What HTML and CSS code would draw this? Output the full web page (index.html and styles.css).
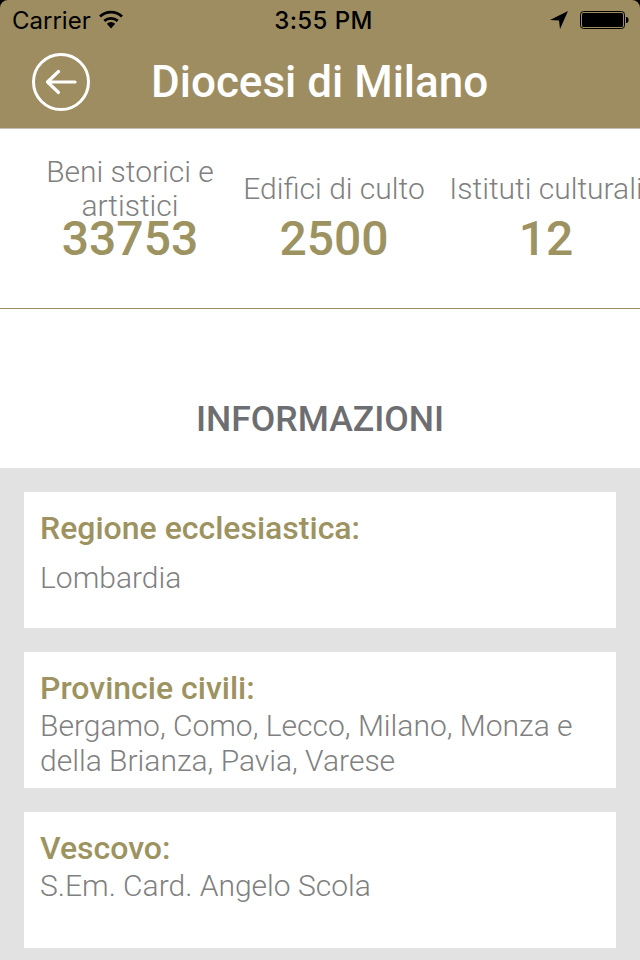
FILE: index.html
```html
<!DOCTYPE html>
<html lang="it">
<head>
<meta charset="utf-8">
<title>Diocesi di Milano</title>
<link rel="stylesheet" href="styles.css">
</head>
<body>
<div class="screen">
  <header class="top">
    <div class="status">
      <div class="status-left">
        <span>Carrier</span>
        <svg class="wifi" width="26" height="20" viewBox="0 0 26 20"><path d="M13 18.500 L8.800 13.800 A6.500 6.500 0 0 1 17.200 13.800 Z" fill="#000"/><path d="M6.300 10.900 A10 10 0 0 1 19.700 10.900" fill="none" stroke="#000" stroke-width="2.800"/><path d="M2 6.500 A16 16 0 0 1 24 6.500" fill="none" stroke="#000" stroke-width="2.800"/></svg>
      </div>
      <div class="status-time">3:55 PM</div>
      <div class="status-right">
        <svg width="20" height="20" viewBox="0 0 20 20"><path d="M19 1 L1 10 L10 10.500 L11 19 Z" fill="#000"/></svg>
        <svg width="49" height="20" viewBox="0 0 49 20"><rect x="0.500" y="1.500" width="44" height="17" rx="3" fill="none" stroke="#000"/><rect x="2" y="3" width="41" height="14" rx="1.500" fill="#000"/><path d="M46 7 C48 7 48.500 8 48.500 10 C48.500 12 48 13 46 13 Z" fill="#000"/></svg>
      </div>
    </div>
    <div class="nav">
      <svg class="back" width="60" height="60" viewBox="0 0 60 60"><circle cx="30" cy="30" r="27.500" fill="none" stroke="#fff" stroke-width="3"/><path d="M44 30 H17 M27.500 19.500 L16.500 30 L27.500 40.500" fill="none" stroke="#fff" stroke-width="3.200" stroke-linecap="round" stroke-linejoin="round"/></svg>
      <h1 class="title">Diocesi di Milano</h1>
    </div>
    <i class="corner corner-l"></i>
    <i class="corner corner-r"></i>
  </header>
  <section class="stats">
    <div class="stat stat-a"><div class="stat-label">Beni storici e artistici</div><div class="stat-num">33753</div></div>
    <div class="stat stat-b"><div class="stat-label">Edifici di culto</div><div class="stat-num">2500</div></div>
    <div class="stat stat-c"><div class="stat-label">Istituti culturali</div><div class="stat-num">12</div></div>
  </section>
  <h2 class="section-title">INFORMAZIONI</h2>
  <section class="panel">
    <article class="card card-a"><h3 class="card-head">Regione ecclesiastica:</h3><p class="card-text">Lombardia</p></article>
    <article class="card"><h3 class="card-head">Provincie civili:</h3><p class="card-text">Bergamo, Como, Lecco, Milano, Monza e della Brianza, Pavia, Varese</p></article>
    <article class="card"><h3 class="card-head">Vescovo:</h3><p class="card-text">S.Em. Card. Angelo Scola</p></article>
  </section>
</div>
</body>
</html>
```
FILE: styles.css
```css
html, body { margin: 0; padding: 0; }
body { width: 640px; height: 960px; overflow: hidden; background: #fff; font-family: Roboto, "Liberation Sans", sans-serif; }
.screen { width: 640px; height: 960px; display: flex; flex-direction: column; overflow: hidden; }
.top { position: relative; height: 129px; flex: none; box-sizing: border-box; background: #9e8d60; border-bottom: 1px solid #c4c0b4; }
.status { height: 40px; display: flex; align-items: center; justify-content: space-between; padding: 0 11px 0 12px; font-family: Inter, sans-serif; font-size: 24px; color: #000; position: relative; }
.status-left { display: flex; align-items: center; gap: 7px; }
.status-time { position: absolute; left: 7px; right: 0; text-align: center; font-weight: 500; font-size: 24px; letter-spacing: 0.4px; }
.status-right { display: flex; align-items: center; gap: 11px; }
.nav { display: flex; align-items: center; height: 84px; padding-left: 31px; gap: 60px; }
.back { flex: none; }
.title { margin: 0; color: #fff; font-size: 44px; font-weight: 500; line-height: 50px; white-space: nowrap; }
.corner { position: absolute; top: 0; width: 8px; height: 8px; background: #000; }
.corner-l { left: 0; clip-path: path("M0 0 H8 A8 8 0 0 0 0 8 Z"); }
.corner-r { right: 0; clip-path: path("M0 0 H8 V8 A8 8 0 0 0 0 0 Z"); }
.stats { height: 180px; flex: none; box-sizing: border-box; border-bottom: 1px solid #9e8d60; display: flex; overflow: hidden; padding-top: 26px; }
.stat { flex: none; text-align: center; display: flex; flex-direction: column; }
.stat-a { width: 180px; margin-left: 40px; }
.stat-b { width: 180px; margin-left: 24px; }
.stat-c { width: 200px; margin-left: 22px; }
.stat-label { height: 68px; display: flex; align-items: center; justify-content: center; color: #808080; font-size: 30px; font-weight: 300; line-height: 34px; }
.stat-b .stat-label, .stat-c .stat-label { white-space: nowrap; }
.stat-num { color: #9d9361; font-size: 48px; font-weight: 500; line-height: 50px; margin-top: -9px; }
.section-title { margin: 0; height: 159px; flex: none; box-sizing: border-box; padding-top: 88px; text-align: center; font-size: 35.600px; font-weight: 500; line-height: 44px; color: #6d6e71; }
.panel { flex: 1; background: #e2e2e2; padding: 24px 24px 0; display: flex; flex-direction: column; gap: 24px; }
.card { height: 136px; flex: none; box-sizing: border-box; background: #fff; padding: 18px 16px 0; }
.card-head { margin: 0; color: #9d9361; font-size: 32px; font-weight: 500; line-height: 36px; }
.card-text { margin: 2px 0 0; color: #808080; font-size: 30px; font-weight: 300; line-height: 35px; }
.card-a .card-text { margin-top: 14px; }
```
